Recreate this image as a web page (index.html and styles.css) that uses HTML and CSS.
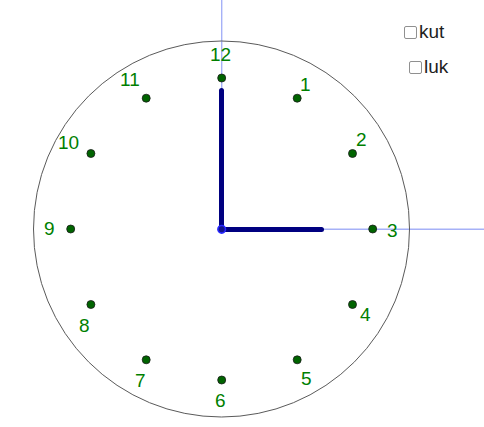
FILE: index.html
```html
<!DOCTYPE html>
<html>
<head>
<meta charset="utf-8">
<link rel="stylesheet" href="styles.css">
</head>
<body>
<div class="stage">
  <svg class="canvas" width="484" height="427" viewBox="0 0 484 427" xmlns="http://www.w3.org/2000/svg">
    <line class="axis" x1="221.7" y1="0" x2="221.7" y2="229.3"/>
    <line class="axis" x1="221.7" y1="229.3" x2="484" y2="229.3"/>
    <circle class="face" cx="221.5" cy="229" r="188"/>
    <g class="dots">
      <circle cx="221.7" cy="78" r="4"/>
      <circle cx="297.2" cy="98.2" r="4"/>
      <circle cx="352.5" cy="153.5" r="4"/>
      <circle cx="372.7" cy="229" r="4"/>
      <circle cx="352.5" cy="304.5" r="4"/>
      <circle cx="297.2" cy="359.8" r="4"/>
      <circle cx="221.7" cy="380" r="4"/>
      <circle cx="146.2" cy="359.8" r="4"/>
      <circle cx="90.9" cy="304.5" r="4"/>
      <circle cx="70.7" cy="229" r="4"/>
      <circle cx="90.9" cy="153.5" r="4"/>
      <circle cx="146.2" cy="98.2" r="4"/>
    </g>
    <g class="labels">
      <text x="210" y="61">12</text>
      <text x="300" y="91">1</text>
      <text x="356" y="146">2</text>
      <text x="387" y="237">3</text>
      <text x="360" y="321">4</text>
      <text x="301" y="385">5</text>
      <text x="215" y="407">6</text>
      <text x="135" y="387">7</text>
      <text x="79" y="332">8</text>
      <text x="44" y="235">9</text>
      <text x="58" y="149">10</text>
      <text x="120" y="86">11</text>
    </g>
    <line class="hand" x1="221.5" y1="229.5" x2="221.5" y2="90.5"/>
    <line class="hand" x1="221.5" y1="229.5" x2="321.5" y2="229.5"/>
    <circle class="center" cx="221.7" cy="229.3" r="3.8"/>
  </svg>
  <div class="controls">
    <label class="cb"><span class="box"></span><span class="txt">kut</span></label>
    <label class="cb cb-luk"><span class="box"></span><span class="txt">luk</span></label>
  </div>
</div>
</body>
</html>
```
FILE: styles.css
```css
html, body {
  margin: 0;
  padding: 0;
  background: #ffffff;
}
.stage {
  position: relative;
  width: 484px;
  height: 427px;
  overflow: hidden;
  font-family: "Liberation Sans", Arial, sans-serif;
}
.canvas {
  display: block;
}
.axis {
  stroke: #a6b1f7;
  stroke-width: 1.4;
}
.face {
  fill: none;
  stroke: #5a5a5a;
  stroke-width: 1;
}
.dots circle {
  fill: #006400;
  stroke: #1a1a1a;
  stroke-width: 0.8;
}
.labels text {
  fill: #007f00;
  font-family: "Liberation Sans", Arial, sans-serif;
  font-size: 19px;
}
.hand {
  stroke: #000080;
  stroke-width: 5;
  stroke-linecap: round;
}
.center {
  fill: #14148c;
  stroke: #2828ff;
  stroke-width: 1.6;
}
.controls {
  position: absolute;
  left: 404px;
  top: 21px;
  display: flex;
  flex-direction: column;
  gap: 13px;
}
.cb {
  display: flex;
  align-items: center;
  gap: 2px;
  height: 22px;
  font-size: 19px;
  line-height: 22px;
  color: #1e1e1e;
}
.cb-luk {
  margin-left: 5px;
}
.box {
  width: 11px;
  height: 11px;
  border: 1px solid #909090;
  border-radius: 2px;
  background: #ffffff;
}
```
